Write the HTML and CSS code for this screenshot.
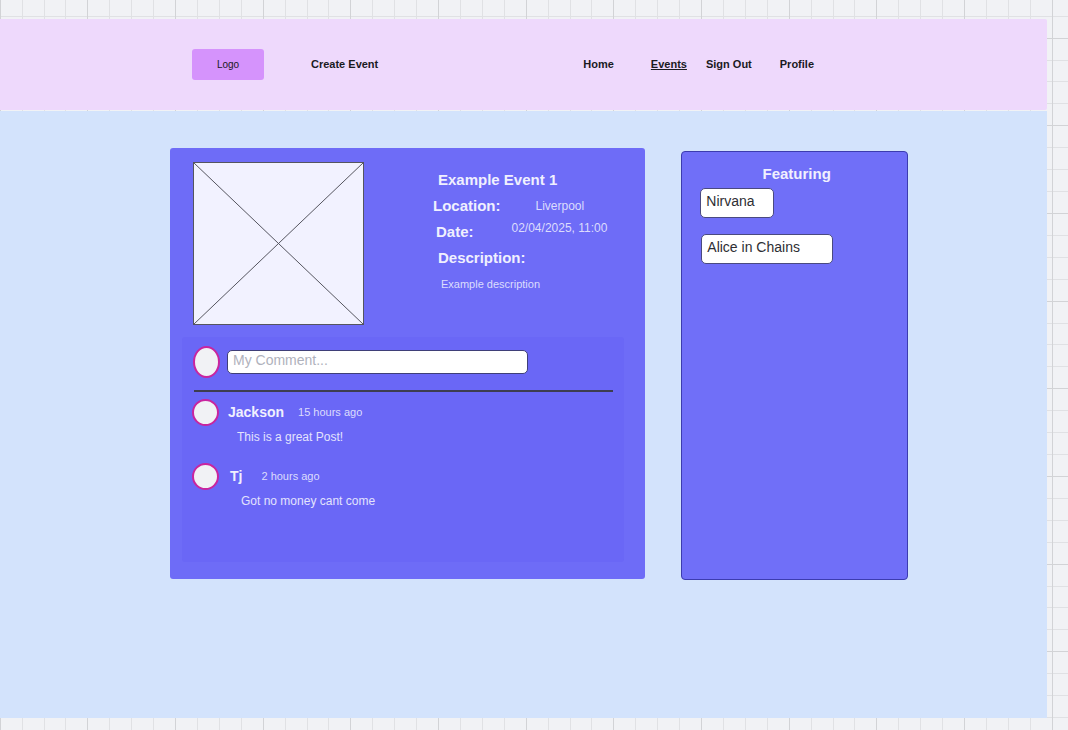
FILE: index.html
```html
<!DOCTYPE html>
<html lang="en">
<head>
<meta charset="utf-8">
<title>Example Event 1</title>
<link rel="stylesheet" href="styles.css">
</head>
<body>
<svg class="canvas-grid" aria-hidden="true">
  <defs>
    <pattern id="grid" y="38" width="263" height="263" patternUnits="userSpaceOnUse">
      <path class="minor" d="M22.5 0v263M44.5 0v263M65.5 0v263M109.5 0v263M131.5 0v263M153.5 0v263M197.5 0v263M219.5 0v263M241.5 0v263M0 22.5h263M0 43.5h263M0 65.5h263M0 109.5h263M0 131.5h263M0 153.5h263M0 197.5h263M0 219.5h263M0 241.5h263"/>
      <path class="major" d="M.5 0v263M87.5 0v263M175.5 0v263M0 .5h263M0 87.5h263M0 175.5h263"/>
    </pattern>
  </defs>
  <rect width="100%" height="100%" fill="url(#grid)"/>
</svg>
<div class="page">
  <header class="site-header">
    <a class="logo" href="#">Logo</a>
    <a class="nav-link create" href="#">Create Event</a>
    <nav class="nav">
      <a class="nav-link home" href="#">Home</a>
      <a class="nav-link active" href="#" aria-current="page">Events</a>
      <a class="nav-link sign-out" href="#">Sign Out</a>
      <a class="nav-link profile" href="#">Profile</a>
    </nav>
  </header>
  <main class="content">
    <article class="event">
      <div class="event-top">
        <svg class="picture" viewBox="0 0 171 163" role="img" aria-label="Event picture">
          <rect x=".5" y=".5" width="170" height="162"/>
          <path d="M.5 .5l170 162M170.5 .5l-170 162"/>
        </svg>
        <div class="details">
          <h1 class="heading title">Example Event 1</h1>
          <div class="row"><h2 class="heading">Location:</h2><span class="value place">Liverpool</span></div>
          <div class="row"><h2 class="heading date">Date:</h2><time class="value when">02/04/2025, 11:00</time></div>
          <h2 class="heading about">Description:</h2>
          <p class="description">Example description</p>
        </div>
      </div>
      <section class="comments" aria-label="Comments">
        <form class="composer">
          <span class="avatar tall"></span>
          <input class="comment-input" type="text" placeholder="My Comment..." aria-label="My Comment">
        </form>
        <hr class="divider">
        <div class="comment">
          <span class="avatar"></span>
          <div class="comment-body">
            <div class="byline"><strong class="author">Jackson</strong><span class="ago">15 hours ago</span></div>
            <p class="comment-text">This is a great Post!</p>
          </div>
        </div>
        <div class="comment reply">
          <span class="avatar"></span>
          <div class="comment-body">
            <div class="byline"><strong class="author">Tj</strong><span class="ago">2 hours ago</span></div>
            <p class="comment-text">Got no money cant come</p>
          </div>
        </div>
      </section>
    </article>
    <aside class="featuring">
      <h2 class="heading featuring-title">Featuring</h2>
      <ul class="bands">
        <li class="band">Nirvana</li>
        <li class="band wide">Alice in Chains</li>
      </ul>
    </aside>
  </main>
</div>
</body>
</html>
```
FILE: styles.css
```css
* {
  box-sizing: border-box;
}

body {
  margin: 0;
  background: #f1f2f5;
  font-family: "Liberation Sans", Arial, sans-serif;
}

h1, h2, p, ul {
  margin: 0;
  padding: 0;
}

.canvas-grid {
  position: absolute;
  inset: 0;
  width: 100%;
  height: 100%;
  z-index: -1;
}

.minor {
  stroke: #e0e1e4;
}

.major {
  stroke: #d2d3d6;
}

.page {
  display: flex;
  flex-direction: column;
  gap: 1px;
  min-height: 100vh;
  padding: 19px 21px 12px 0;
}

.site-header {
  display: flex;
  align-items: center;
  min-height: 91px;
  padding: 0 233px 1px 192px;
  background: #eed9fc;
  border-radius: 0 2px 2px 0;
}

.logo {
  width: 72px;
  background: #d593fc;
  border-radius: 3px;
  color: #1a1a1a;
  font-size: 10px;
  line-height: 31px;
  text-align: center;
  text-decoration: none;
}

.nav-link {
  color: #1a1a1f;
  font-size: 11px;
  font-weight: bold;
  line-height: 16px;
  text-decoration: none;
}

.create {
  margin-left: 47px;
}

.nav {
  display: flex;
  margin-left: auto;
}

.home {
  margin-right: 37px;
}

.active {
  margin-right: 19px;
  text-decoration: underline;
}

.sign-out {
  margin-right: 28px;
}

.content {
  display: grid;
  flex: 1;
  grid-template-columns: 476fr 227fr;
  align-items: start;
  gap: 36px;
  padding: 37px 139px 37px 170px;
  background: #d3e3fc;
}

.event {
  padding: 14px 21px 17px 12px;
  background: #6e6cf7;
  border-radius: 3px;
}

.event-top {
  display: flex;
  padding-left: 11px;
}

.picture {
  width: 171px;
  height: 163px;
  fill: #f2f2ff;
  stroke: #55555f;
}

.details {
  margin: 5px 0 0 69px;
}

.row {
  display: flex;
}

.heading {
  color: #f0f0fe;
  font-size: 15px;
  font-weight: bold;
  line-height: 26px;
}

.title {
  padding-left: 5px;
}

.place {
  margin-left: 35px;
  line-height: 26px;
}

.date {
  padding-left: 3px;
}

.when {
  margin-left: 38px;
  line-height: 18px;
}

.about {
  padding-left: 5px;
}

.value {
  color: #dcdcfd;
  font-size: 12px;
}

.description {
  padding-left: 8px;
  color: #dcdcfd;
  font-size: 11px;
  line-height: 26px;
}

.comments {
  min-height: 225px;
  margin-top: 12px;
  padding: 9px 11px 16px 10px;
  background: #6a67f6;
  border-radius: 3px;
}

.composer {
  display: flex;
  align-items: center;
  gap: 7px;
  padding-left: 1px;
}

.avatar {
  flex: none;
  width: 27px;
  height: 27px;
  background: #f1f2f5;
  border: 2px solid #c9259f;
  border-radius: 50%;
}

.tall {
  height: 32px;
}

.comment-input {
  width: 301px;
  height: 24px;
  padding: 0 5px 4px;
  background: #fff;
  border: 1px solid #3f3f78;
  border-radius: 5px;
  font-family: inherit;
  font-size: 14px;
}

.comment-input::placeholder {
  color: #b0b2bc;
}

.divider {
  height: 2px;
  margin: 12px 0 7px 2px;
  background: #3d3d50;
  border: 0;
}

.comment {
  display: flex;
  gap: 9px;
}

.reply {
  margin-top: 13px;
}

.byline {
  display: flex;
  align-items: center;
  gap: 14px;
}

.author {
  color: #f0f0fe;
  font-size: 14px;
  line-height: 26px;
}

.ago {
  color: #dcdcfd;
  font-size: 11px;
}

.comment-text {
  padding-left: 9px;
  color: #e3e3fd;
  font-size: 12px;
  line-height: 25px;
}

.reply .byline {
  gap: 19px;
  padding-left: 2px;
}

.reply .comment-text {
  padding-left: 13px;
}

.featuring {
  min-height: 429px;
  margin-top: 3px;
  padding: 9px 18px;
  background: #706ff8;
  border: 1px solid #3c3caf;
  border-radius: 4px;
}

.featuring-title {
  padding-left: 4px;
  text-align: center;
}

.bands {
  display: flex;
  flex-direction: column;
  align-items: flex-start;
  gap: 16px;
  margin-top: 1px;
  list-style: none;
}

.band {
  width: 74px;
  padding: 0 5px 4px;
  background: #fff;
  border: 1px solid #4a4a80;
  border-radius: 5px;
  color: #2e2e33;
  font-size: 14px;
  line-height: 24px;
}

.wide {
  width: 132px;
  margin-left: 1px;
}
```
